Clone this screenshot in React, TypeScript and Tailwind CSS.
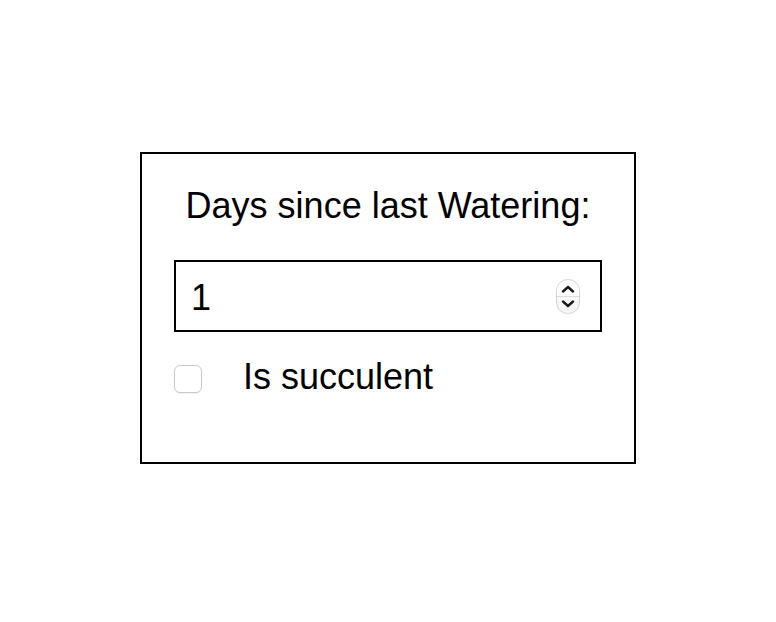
import React from "react";

export default function App() {
  return (
    <div
      className="w-[776px] h-[622px] bg-white pt-[152px]"
      style={{ fontFamily: '"Liberation Sans", Arial, sans-serif' }}
    >
      <div className="mx-auto w-[496px] h-[312px] border-2 border-black px-[32px] pt-[31px] text-black">
        <div className="text-[36px] leading-[41px] text-center">Days since last Watering:</div>
        <div className="mt-[34px] h-[72px] border-2 border-black flex items-center pl-[15px] pr-[20px]">
          <input
            type="text"
            defaultValue="1"
            className="flex-1 min-w-0 bg-transparent outline-none text-[36px] leading-[41px] text-black pt-[2px]"
            style={{ fontFamily: '"Liberation Sans", Arial, sans-serif' }}
          />
          <svg width="24" height="35" viewBox="0 0 24 35" className="shrink-0">
            <defs>
              <linearGradient id="sg" x1="0" y1="0" x2="0" y2="1">
                <stop offset="0" stopColor="#ffffff" />
                <stop offset="1" stopColor="#f4f4f4" />
              </linearGradient>
            </defs>
            <rect x="0.5" y="0.5" width="23" height="34" rx="11" fill="url(#sg)" stroke="#d6d6d6" />
            <line x1="1" y1="17.5" x2="23" y2="17.5" stroke="#dcdcdc" strokeWidth="1" />
            <path d="M7 12.5 L12 8 L17 12.5" fill="none" stroke="#1a1a1a" strokeWidth="2.4" strokeLinecap="round" strokeLinejoin="round" />
            <path d="M7 22.5 L12 27 L17 22.5" fill="none" stroke="#1a1a1a" strokeWidth="2.4" strokeLinecap="round" strokeLinejoin="round" />
          </svg>
        </div>
        <div className="mt-[24px] flex items-start">
          <input
            type="checkbox"
            className="appearance-none mt-[9px] w-[28px] h-[28px] rounded-[6px] border border-[#c9c9c9] bg-white shadow-[0_1px_1px_rgba(0,0,0,0.06)] shrink-0"
          />
          <span className="ml-[41px] text-[36px] leading-[41px]">Is succulent</span>
        </div>
      </div>
    </div>
  );
}
